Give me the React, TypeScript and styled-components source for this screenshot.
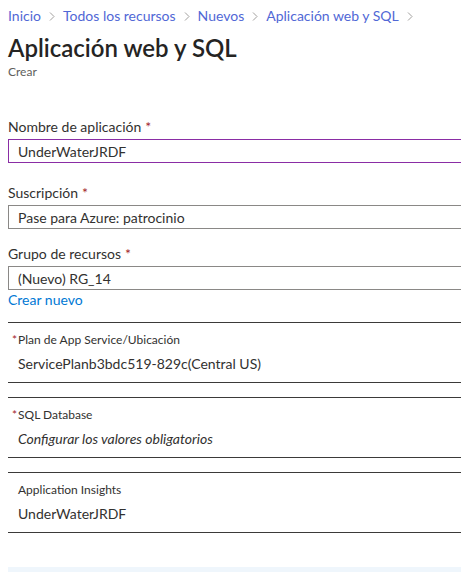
import React from "react";
import styled, { createGlobalStyle } from "styled-components";

const GlobalStyle=createGlobalStyle`
  body {
    margin:0;
    background:#fff;
    font-family:"Segoe UI",Lato,"Noto Sans",sans-serif;
    color:#323130;
    overflow:hidden;
  }
`;

const Page=styled.div`
  width:620px;
  padding:6px 0 0 8px;
`;

const Breadcrumb=styled.nav`
  display:flex;
  align-items:center;
  font-size:14px;
  line-height:20px;
`;

const Crumb=styled.a`
  color:#5168d6;
  text-decoration:none;
`;

const Chevron=styled.span`
  display:inline-flex;
  margin:0 7px 0 7px;
  svg {
    width:8px;
    height:9px;
  }
`;

const Title=styled.h1`
  margin:6px 0 0;
  font-size:24px;
  line-height:32px;
  font-weight:600;
  color:#252423;
`;

const Subtitle=styled.div`
  font-size:12px;
  line-height:16px;
  color:#605e5c;
`;

const Form=styled.form`
  display:flex;
  flex-direction:column;
  margin-top:37px;
`;

const Field=styled.div<{gap:number}>`
  display:flex;
  flex-direction:column;
  margin-bottom:${p=>p.gap}px;
`;

const Label=styled.label`
  font-size:14px;
  line-height:20px;
  margin-bottom:2px;
`;

const Required=styled.span`
  color:#a4262c;
  margin-left:4px;
`;

const Input=styled.input<{active?:boolean}>`
  box-sizing:border-box;
  width:100%;
  height:24px;
  padding:0 9px;
  border:1px solid ${p=>p.active ? "#8a2da5" : "#8a8886"};
  border-radius:0;
  font-family:inherit;
  font-size:14px;
  color:#323130;
  background:#fff;
  outline:none;
`;

const Link=styled.a`
  font-size:14px;
  line-height:20px;
  color:#0078d4;
  text-decoration:none;
`;

const Summary=styled.div`
  display:flex;
  flex-direction:column;
  margin-top:12px;
`;

const Section=styled.div`
  border-top:1px solid #3b3a39;
  border-bottom:1px solid #3b3a39;
  padding:9px 10px 8px;
  margin-bottom:14px;
`;

const SectionLabel=styled.div`
  font-size:12px;
  line-height:16px;
  color:#323130;
`;

const Star=styled.span`
  color:#a4262c;
  margin-left:-6px;
  margin-right:1px;
`;

const SectionValue=styled.div<{placeholder?:boolean}>`
  margin-top:6px;
  font-size:14px;
  line-height:20px;
  font-style:${p=>p.placeholder ? "italic" : "normal"};
  color:#323130;
`;

const Footer=styled.div`
  margin-top:20px;
  height:8px;
  background:#eff6fc;
`;

function ChevronIcon() {
  return (
    <Chevron>
      <svg viewBox="0 0 8 9" fill="none" stroke="#a19f9d" strokeWidth="1">
        <path d="M2 0.5 L6 4.5 L2 8.5" />
      </svg>
    </Chevron>
  );
}

export default function App() {
  const crumbs=["Inicio","Todos los recursos","Nuevos","Aplicación web y SQL"];
  return (
    <>
      <GlobalStyle />
      <Page>
        <Breadcrumb>
          {crumbs.map(c=>(
            <React.Fragment key={c}>
              <Crumb href="#">{c}</Crumb>
              <ChevronIcon />
            </React.Fragment>
          ))}
        </Breadcrumb>
        <Title>Aplicación web y SQL</Title>
        <Subtitle>Crear</Subtitle>
        <Form onSubmit={e=>e.preventDefault()}>
          <Field gap={20}>
            <Label>Nombre de aplicación<Required>*</Required></Label>
            <Input active defaultValue="UnderWaterJRDF" />
          </Field>
          <Field gap={15}>
            <Label>Suscripción<Required>*</Required></Label>
            <Input defaultValue="Pase para Azure: patrocinio" />
          </Field>
          <Field gap={0}>
            <Label>Grupo de recursos<Required>*</Required></Label>
            <Input defaultValue="(Nuevo) RG_14" />
            <Link href="#">Crear nuevo</Link>
          </Field>
        </Form>
        <Summary>
          <Section>
            <SectionLabel><Star>*</Star>Plan de App Service/Ubicación</SectionLabel>
            <SectionValue>ServicePlanb3bdc519-829c(Central US)</SectionValue>
          </Section>
          <Section>
            <SectionLabel><Star>*</Star>SQL Database</SectionLabel>
            <SectionValue placeholder>Configurar los valores obligatorios</SectionValue>
          </Section>
          <Section>
            <SectionLabel>Application Insights</SectionLabel>
            <SectionValue>UnderWaterJRDF</SectionValue>
          </Section>
        </Summary>
        <Footer />
      </Page>
    </>
  );
}
